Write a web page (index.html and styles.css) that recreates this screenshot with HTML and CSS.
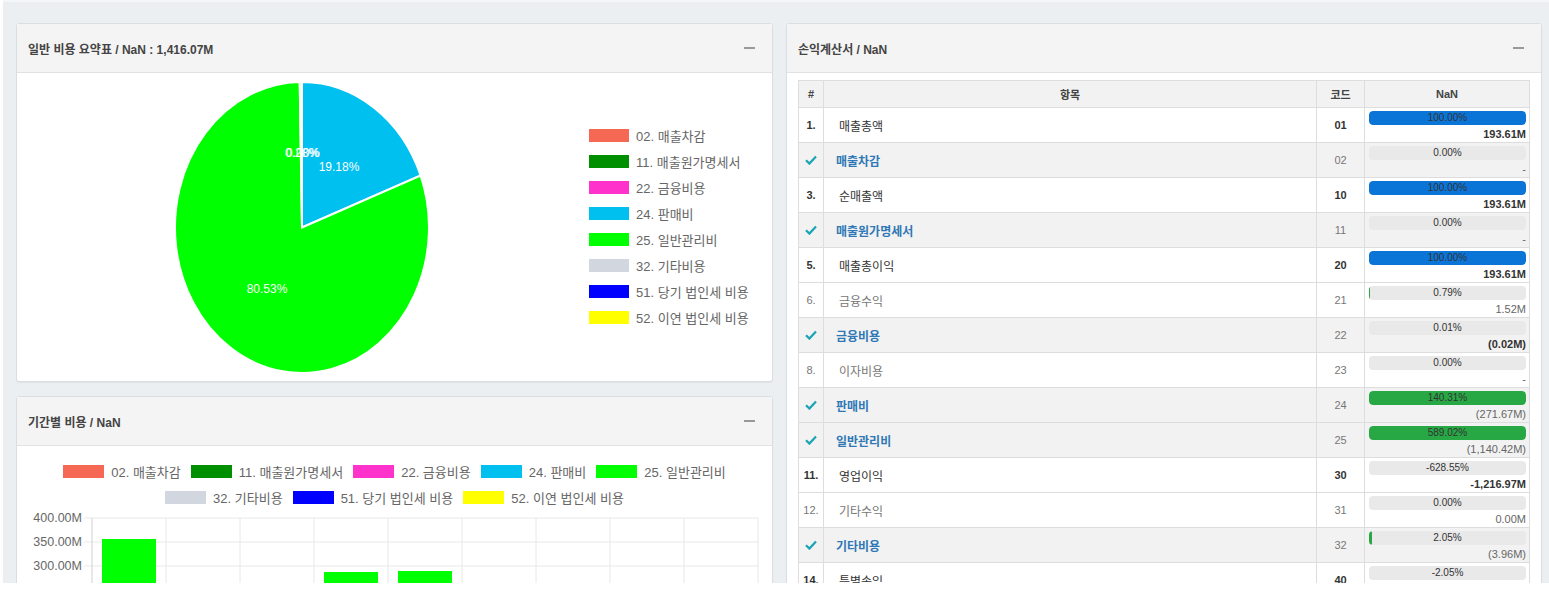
FILE: index.html
```html
<html>
    <head>
        <title>비용 대시보드</title>
        <link rel="stylesheet" href="styles.css">
    </head>
    <body>
        <div class="page">
            <div class="col left">
                <div class="box pie-box">
                    <div class="box-header"><h3>일반 비용 요약표 / NaN : 1,416.07M</h3><span class="minus"></span></div>
                    <div class="box-body pie-body">
                        <svg class="pie" width="260" height="308" viewBox="0 0 260 308">
                            <g transform="translate(130 154.5) scale(1 1.1457)">
                                <path d="M0 0 L0 -127 A127 127 0 0 1 118.6 -45.4 Z" fill="#00c0ef" stroke="#fff" stroke-width="2" vector-effect="non-scaling-stroke"/>
                                <path d="M0 0 L118.6 -45.4 A127 127 0 1 1 -2.3 -127 Z" fill="#00ff00" stroke="#fff" stroke-width="2" vector-effect="non-scaling-stroke"/>
                                <path d="M0 0 L-2.3 -127 A127 127 0 0 1 0 -127 Z" fill="#d2d6de" stroke="#fff" stroke-width="2" vector-effect="non-scaling-stroke"/>
                            </g>
                            <text x="130" y="84" class="pie-label">0.28%</text>
                            <text x="131" y="84" class="pie-label">0.00%</text>
                            <text x="167" y="98" class="pie-label">19.18%</text>
                            <text x="95" y="220" class="pie-label">80.53%</text>
                        </svg>
                        <ul class="legend-list">
                            <li><span class="swatch c02"></span>02. 매출차감</li>
                            <li><span class="swatch c11"></span>11. 매출원가명세서</li>
                            <li><span class="swatch c22"></span>22. 금융비용</li>
                            <li><span class="swatch c24"></span>24. 판매비</li>
                            <li><span class="swatch c25"></span>25. 일반관리비</li>
                            <li><span class="swatch c32"></span>32. 기타비용</li>
                            <li><span class="swatch c51"></span>51. 당기 법인세 비용</li>
                            <li><span class="swatch c52"></span>52. 이연 법인세 비용</li>
                        </ul>
                    </div>
                </div>
                <div class="box bar-box">
                    <div class="box-header"><h3>기간별 비용 / NaN</h3><span class="minus"></span></div>
                    <div class="box-body bar-body">
                        <div class="bar-legend">
                            <div class="legend-row">
                                <span class="item"><span class="swatch c02"></span>02. 매출차감</span>
                                <span class="item"><span class="swatch c11"></span>11. 매출원가명세서</span>
                                <span class="item"><span class="swatch c22"></span>22. 금융비용</span>
                                <span class="item"><span class="swatch c24"></span>24. 판매비</span>
                                <span class="item"><span class="swatch c25"></span>25. 일반관리비</span>
                            </div>
                            <div class="legend-row">
                                <span class="item"><span class="swatch c32"></span>32. 기타비용</span>
                                <span class="item"><span class="swatch c51"></span>51. 당기 법인세 비용</span>
                                <span class="item"><span class="swatch c52"></span>52. 이연 법인세 비용</span>
                            </div>
                        </div>
                        <svg class="bars" width="755" height="100" viewBox="0 0 755 100">
                            <g class="grid">
                                <line x1="67" y1="8" x2="741" y2="8"/>
                                <line x1="67" y1="32" x2="741" y2="32"/>
                                <line x1="67" y1="56" x2="741" y2="56"/>
                                <line x1="67" y1="80" x2="741" y2="80"/>
                                <line x1="149" y1="8" x2="149" y2="100"/>
                                <line x1="223" y1="8" x2="223" y2="100"/>
                                <line x1="297" y1="8" x2="297" y2="100"/>
                                <line x1="371" y1="8" x2="371" y2="100"/>
                                <line x1="445" y1="8" x2="445" y2="100"/>
                                <line x1="519" y1="8" x2="519" y2="100"/>
                                <line x1="593" y1="8" x2="593" y2="100"/>
                                <line x1="667" y1="8" x2="667" y2="100"/>
                                <line x1="741" y1="8" x2="741" y2="100"/>
                            </g>
                            <line class="axis" x1="75" y1="8" x2="75" y2="100"/>
                            <text x="65" y="12" class="tick">400.00M</text>
                            <text x="65" y="36" class="tick">350.00M</text>
                            <text x="65" y="60" class="tick">300.00M</text>
                            <text x="65" y="84" class="tick">250.00M</text>
                            <rect x="85" y="29" width="54" height="80" fill="#00ff00"/>
                            <rect x="307" y="62" width="54" height="50" fill="#00ff00"/>
                            <rect x="381" y="61" width="54" height="50" fill="#00ff00"/>
                        </svg>
                    </div>
                </div>
            </div>
            <div class="col right">
                <div class="box">
                    <div class="box-header"><h3>손익계산서 / NaN</h3><span class="minus"></span></div>
                    <div class="box-body table-body">
                        <table class="pl">
                            <colgroup><col class="w-no"><col><col class="w-code"><col class="w-val"></colgroup>
                            <tr><th>#</th><th>항목</th><th>코드</th><th>NaN</th></tr>
                            <tr class="total">
                                <td class="no">1.</td><td class="name">매출총액</td><td class="code">01</td>
                                <td class="val"><div class="bar"><i class="fill blue" style="width:100%"></i><span>100.00%</span></div><div class="amt">193.61M</div></td>
                            </tr>
                            <tr class="sub">
                                <td class="no"><svg class="chk" width="12" height="10" viewBox="0 0 12 10"><path d="M1 5.2 L4.4 8.6 L11 1.4"/></svg></td><td class="name"><a>매출차감</a></td><td class="code">02</td>
                                <td class="val"><div class="bar"><span>0.00%</span></div><div class="amt">-</div></td>
                            </tr>
                            <tr class="total">
                                <td class="no">3.</td><td class="name">순매출액</td><td class="code">10</td>
                                <td class="val"><div class="bar"><i class="fill blue" style="width:100%"></i><span>100.00%</span></div><div class="amt">193.61M</div></td>
                            </tr>
                            <tr class="sub">
                                <td class="no"><svg class="chk" width="12" height="10" viewBox="0 0 12 10"><path d="M1 5.2 L4.4 8.6 L11 1.4"/></svg></td><td class="name"><a>매출원가명세서</a></td><td class="code">11</td>
                                <td class="val"><div class="bar"><span>0.00%</span></div><div class="amt">-</div></td>
                            </tr>
                            <tr class="total">
                                <td class="no">5.</td><td class="name">매출총이익</td><td class="code">20</td>
                                <td class="val"><div class="bar"><i class="fill blue" style="width:100%"></i><span>100.00%</span></div><div class="amt">193.61M</div></td>
                            </tr>
                            <tr>
                                <td class="no">6.</td><td class="name">금융수익</td><td class="code">21</td>
                                <td class="val"><div class="bar"><i class="fill green" style="width:0.79%"></i><span>0.79%</span></div><div class="amt">1.52M</div></td>
                            </tr>
                            <tr class="sub">
                                <td class="no"><svg class="chk" width="12" height="10" viewBox="0 0 12 10"><path d="M1 5.2 L4.4 8.6 L11 1.4"/></svg></td><td class="name"><a>금융비용</a></td><td class="code">22</td>
                                <td class="val"><div class="bar"><span>0.01%</span></div><div class="amt strong">(0.02M)</div></td>
                            </tr>
                            <tr>
                                <td class="no">8.</td><td class="name">이자비용</td><td class="code">23</td>
                                <td class="val"><div class="bar"><span>0.00%</span></div><div class="amt">-</div></td>
                            </tr>
                            <tr class="sub">
                                <td class="no"><svg class="chk" width="12" height="10" viewBox="0 0 12 10"><path d="M1 5.2 L4.4 8.6 L11 1.4"/></svg></td><td class="name"><a>판매비</a></td><td class="code">24</td>
                                <td class="val"><div class="bar"><i class="fill green" style="width:100%"></i><span>140.31%</span></div><div class="amt">(271.67M)</div></td>
                            </tr>
                            <tr class="sub">
                                <td class="no"><svg class="chk" width="12" height="10" viewBox="0 0 12 10"><path d="M1 5.2 L4.4 8.6 L11 1.4"/></svg></td><td class="name"><a>일반관리비</a></td><td class="code">25</td>
                                <td class="val"><div class="bar"><i class="fill green" style="width:100%"></i><span>589.02%</span></div><div class="amt">(1,140.42M)</div></td>
                            </tr>
                            <tr class="total">
                                <td class="no">11.</td><td class="name">영업이익</td><td class="code">30</td>
                                <td class="val"><div class="bar"><span>-628.55%</span></div><div class="amt">-1,216.97M</div></td>
                            </tr>
                            <tr>
                                <td class="no">12.</td><td class="name">기타수익</td><td class="code">31</td>
                                <td class="val"><div class="bar"><span>0.00%</span></div><div class="amt">0.00M</div></td>
                            </tr>
                            <tr class="sub">
                                <td class="no"><svg class="chk" width="12" height="10" viewBox="0 0 12 10"><path d="M1 5.2 L4.4 8.6 L11 1.4"/></svg></td><td class="name"><a>기타비용</a></td><td class="code">32</td>
                                <td class="val"><div class="bar"><i class="fill green" style="width:2.05%"></i><span>2.05%</span></div><div class="amt">(3.96M)</div></td>
                            </tr>
                            <tr class="total">
                                <td class="no">14.</td><td class="name">특별손익</td><td class="code">40</td>
                                <td class="val"><div class="bar"><span>-2.05%</span></div><div class="amt">-3.96M</div></td>
                            </tr>
                        </table>
                    </div>
                </div>
            </div>
        </div>
    </body>
</html>
```

FILE: styles.css
```css
* {
    font-family: "Liberation Sans", "Noto Sans CJK KR", sans-serif;
    box-sizing: border-box;
}
body {
    margin: 0;
    height: 597px;
    overflow: hidden;
    background-color: #fff;
}
.page {
    display: flex;
    gap: 13px;
    margin-left: 3px;
    height: 583px;
    padding: 21px 7px 0 13px;
    background-color: #ebeff2;
    border-top: 2px solid #f4f6f7;
    overflow: hidden;
}
.col {
    display: flex;
    flex-direction: column;
    gap: 14px;
}
.left {
    width: 757px;
    flex-shrink: 0;
}
.right {
    flex-grow: 1;
}
.box {
    background-color: #fff;
    border: 1px solid #d9dee2;
    border-radius: 3px;
    box-shadow: 0 1px 1px rgba(0, 0, 0, 0.05);
}
.box-header {
    display: flex;
    align-items: center;
    justify-content: space-between;
    height: 49px;
    padding: 0 17px 0 11px;
    background-color: #f4f4f4;
    border-bottom: 1px solid #e2e2e2;
}
h3 {
    margin: 0;
    font-size: 12px;
    font-weight: bold;
    color: #444;
}
.minus {
    width: 11px;
    height: 1.5px;
    background-color: #999;
}
.pie-box {
    height: 359px;
    flex-shrink: 0;
}
.pie-body {
    display: flex;
    height: 308px;
}
.pie {
    margin-left: 155px;
}
.pie-label {
    font-size: 12px;
    fill: #fff;
    text-anchor: middle;
}
.legend-list {
    list-style: none;
    margin: 49px 0 0 157px;
    padding: 0;
}
.legend-list li {
    display: flex;
    align-items: center;
    height: 26px;
    font-size: 13px;
    color: #666;
}
.swatch {
    display: inline-block;
    width: 40px;
    height: 13px;
    margin-right: 7px;
}
.c02 { background-color: #f56954; }
.c11 { background-color: #008f00; }
.c22 { background-color: #ff33cc; }
.c24 { background-color: #00c0ef; }
.c25 { background-color: #00ff00; }
.c32 { background-color: #d2d6de; }
.c51 { background-color: #0000ff; }
.c52 { background-color: #ffff00; }
.bar-box {
    flex-grow: 1;
}
.bar-legend {
    padding-top: 12px;
}
.legend-row {
    display: flex;
    justify-content: center;
    height: 26px;
    align-items: center;
    font-size: 13px;
    color: #666;
}
.legend-row .item {
    display: flex;
    align-items: center;
    margin: 0 5px;
}
.legend-row .swatch {
    width: 41px;
}
.bars {
    display: block;
}
.grid line {
    stroke: #e8e8e8;
    stroke-width: 1;
}
.axis {
    stroke: #d0d0d0;
    stroke-width: 1;
}
.tick {
    font-size: 12.5px;
    fill: #666;
    text-anchor: end;
}
.table-body {
    padding: 7px 11px 0 11px;
}
.pl {
    width: 100%;
    border-collapse: collapse;
    table-layout: fixed;
    font-size: 11px;
}
.w-no { width: 25px; }
.w-code { width: 48px; }
.w-val { width: 165px; }
.pl th {
    height: 27px;
    background-color: #f2f2f2;
    border: 1px solid #ddd;
    color: #444;
    font-weight: bold;
    text-align: center;
}
.pl td {
    height: 35px;
    border: 1px solid #ddd;
    color: #777;
    vertical-align: middle;
}
.pl .sub td {
    background-color: #f2f2f2;
}
.no {
    text-align: center;
}
.pl td.name {
    padding-left: 15px;
    font-size: 12px;
}
.pl .sub td.name {
    padding-left: 12px;
}
.name a {
    color: #2f78b5;
    font-weight: bold;
}
.code {
    text-align: center;
}
.total .no, .total .code, .total .amt, .amt.strong {
    color: #333;
    font-weight: bold;
}
.pl .total td.name {
    color: #333;
}
.chk {
    display: block;
    margin: 0 auto;
}
.chk path {
    fill: none;
    stroke: #1ba3b6;
    stroke-width: 2.2;
}
.pl td.val {
    vertical-align: top;
    padding: 3px 3px 0 4px;
}
.bar {
    position: relative;
    height: 14px;
    background-color: #e9e9e9;
    border-radius: 4px;
    overflow: hidden;
}
.fill {
    position: absolute;
    left: 0;
    top: 0;
    bottom: 0;
    border-radius: 4px;
}
.blue { background-color: #0b74d7; }
.green { background-color: #28a745; }
.bar span {
    position: relative;
    display: block;
    text-align: center;
    line-height: 14px;
    font-size: 10px;
    color: #333;
}
.amt {
    margin-top: 2px;
    line-height: 14px;
    text-align: right;
    color: #666;
}
```
